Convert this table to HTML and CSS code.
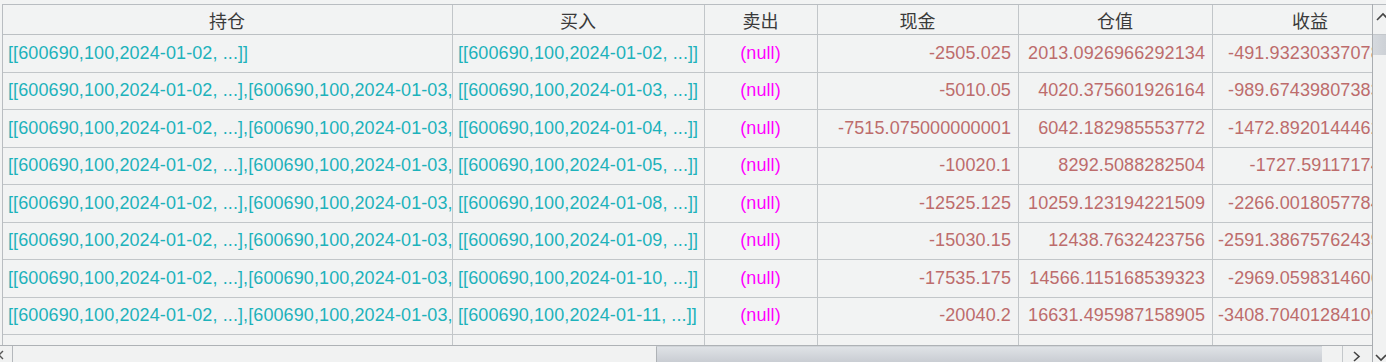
FILE: index.html
```html
<!DOCTYPE html>
<html>
<head>
<meta charset="utf-8">
<link rel="stylesheet" href="styles.css">
</head>
<body>
<div class="frame">
  <div class="main">
    <div class="viewport">
      <div class="table">
        <div class="row head">
          <div class="cell c">持仓</div>
          <div class="cell c">买入</div>
          <div class="cell c">卖出</div>
          <div class="cell c">现金</div>
          <div class="cell c">仓值</div>
          <div class="cell c">收益</div>
        </div>
        <div class="row">
          <div class="cell t">[[600690,100,2024-01-02, ...]]</div>
          <div class="cell t">[[600690,100,2024-01-02, ...]]</div>
          <div class="cell n">(null)</div>
          <div class="cell r">-2505.025</div>
          <div class="cell r">2013.0926966292134</div>
          <div class="cell r">-491.9323033707866</div>
        </div>
        <div class="row">
          <div class="cell t">[[600690,100,2024-01-02, ...],[600690,100,2024-01-03, ...]]</div>
          <div class="cell t">[[600690,100,2024-01-03, ...]]</div>
          <div class="cell n">(null)</div>
          <div class="cell r">-5010.05</div>
          <div class="cell r">4020.375601926164</div>
          <div class="cell r">-989.6743980738359</div>
        </div>
        <div class="row">
          <div class="cell t">[[600690,100,2024-01-02, ...],[600690,100,2024-01-03, ...]]</div>
          <div class="cell t">[[600690,100,2024-01-04, ...]]</div>
          <div class="cell n">(null)</div>
          <div class="cell r">-7515.075000000001</div>
          <div class="cell r">6042.182985553772</div>
          <div class="cell r">-1472.892014446229</div>
        </div>
        <div class="row">
          <div class="cell t">[[600690,100,2024-01-02, ...],[600690,100,2024-01-03, ...]]</div>
          <div class="cell t">[[600690,100,2024-01-05, ...]]</div>
          <div class="cell n">(null)</div>
          <div class="cell r">-10020.1</div>
          <div class="cell r">8292.5088282504</div>
          <div class="cell r">-1727.5911717496</div>
        </div>
        <div class="row">
          <div class="cell t">[[600690,100,2024-01-02, ...],[600690,100,2024-01-03, ...]]</div>
          <div class="cell t">[[600690,100,2024-01-08, ...]]</div>
          <div class="cell n">(null)</div>
          <div class="cell r">-12525.125</div>
          <div class="cell r">10259.123194221509</div>
          <div class="cell r">-2266.001805778491</div>
        </div>
        <div class="row">
          <div class="cell t">[[600690,100,2024-01-02, ...],[600690,100,2024-01-03, ...]]</div>
          <div class="cell t">[[600690,100,2024-01-09, ...]]</div>
          <div class="cell n">(null)</div>
          <div class="cell r">-15030.15</div>
          <div class="cell r">12438.7632423756</div>
          <div class="cell r">-2591.3867576243995</div>
        </div>
        <div class="row">
          <div class="cell t">[[600690,100,2024-01-02, ...],[600690,100,2024-01-03, ...]]</div>
          <div class="cell t">[[600690,100,2024-01-10, ...]]</div>
          <div class="cell n">(null)</div>
          <div class="cell r">-17535.175</div>
          <div class="cell r">14566.115168539323</div>
          <div class="cell r">-2969.059831460677</div>
        </div>
        <div class="row">
          <div class="cell t">[[600690,100,2024-01-02, ...],[600690,100,2024-01-03, ...]]</div>
          <div class="cell t">[[600690,100,2024-01-11, ...]]</div>
          <div class="cell n">(null)</div>
          <div class="cell r">-20040.2</div>
          <div class="cell r">16631.495987158905</div>
          <div class="cell r">-3408.7040128410953</div>
        </div>
        <div class="row">
          <div class="cell"></div>
          <div class="cell"></div>
          <div class="cell"></div>
          <div class="cell"></div>
          <div class="cell"></div>
          <div class="cell"></div>
        </div>
      </div>
    </div>
    <div class="hscroll">
      <div class="hbtn left">
        <svg width="12" height="16" viewBox="0 0 12 16"><path d="M3 5 L-1 9 L3 13" fill="none" stroke="#555" stroke-width="1.4"/></svg>
      </div>
      <div class="htrack">
        <div class="hspace"></div>
        <div class="hthumb"></div>
        <div class="hrest"></div>
      </div>
      <div class="hbtn right">
        <svg width="29" height="16" viewBox="0 0 29 16"><path d="M11 6 L16 10.5 L11 15" fill="none" stroke="#444" stroke-width="1.6"/></svg>
      </div>
    </div>
  </div>
  <div class="vscroll">
    <div class="vbtn up">
      <svg width="14" height="29" viewBox="0 0 14 29"><path d="M4 15 L10 9 L16 15" fill="none" stroke="#444" stroke-width="1.6"/></svg>
    </div>
    <div class="vthumb"></div>
    <div class="vtrack"></div>
    <div class="vbtn down">
      <svg width="14" height="14" viewBox="0 0 14 14"><path d="M3 5 L8 10 L13 5" fill="none" stroke="#444" stroke-width="1.6"/></svg>
    </div>
  </div>
</div>
</body>
</html>
```
FILE: styles.css
```css
html, body {
  margin: 0;
  padding: 0;
  background: #f2f3f3;
  overflow: hidden;
}
body {
  width: 1386px;
  height: 362px;
  font-family: "Liberation Sans", Arial, "Noto Sans CJK SC", sans-serif;
  font-size: 18px;
}
.frame {
  display: flex;
  height: 362px;
  padding-top: 4px;
  box-sizing: border-box;
}
.main {
  width: 1372px;
  display: flex;
  flex-direction: column;
}
.viewport {
  height: 341px;
  overflow: hidden;
  padding-left: 2px;
}
.table {
  border-top: 1px solid #b9bdc1;
  border-left: 1px solid #b9bdc1;
  width: max-content;
}
.row {
  display: grid;
  grid-template-columns: 450px 252px 113px 201px 194px 196px;
  height: 37.5px;
}
.row.head {
  height: 30px;
}
.cell {
  box-sizing: border-box;
  border-right: 1px solid #c2c6c9;
  border-bottom: 1px solid #c2c6c9;
  padding: 0 6px 0 5px;
  white-space: nowrap;
  overflow: hidden;
  display: flex;
  align-items: center;
  letter-spacing: 0.1px;
}
.head .cell {
  color: #3a3a3a;
  font-family: "Noto Sans CJK SC", sans-serif;
  font-size: 18px;
  letter-spacing: 0;
  justify-content: center;
  border-bottom-color: #bcc0c3;
}
.cell.t {
  color: #1db2bb;
}
.cell.n {
  color: #ff00ff;
  justify-content: center;
}
.cell.r {
  color: #bd6c6c;
  justify-content: flex-end;
  padding-right: 7px;
}
.hscroll {
  border-top: 1px solid #aeb2b6;
  display: flex;
  box-sizing: border-box;
  flex: none;
  height: 17px;
}
.hbtn {
  flex: none;
  background: #f0f1f1;
  overflow: hidden;
}
.hbtn.left {
  width: 12px;
  border-right: 1px solid #b4b8bc;
}
.hbtn.right {
  width: 29px;
  border-left: 1px solid #c4c8cb;
}
.htrack {
  flex: 1;
  display: flex;
  background: #f1f2f2;
}
.hspace {
  width: 643px;
}
.hthumb {
  width: 666px;
  box-sizing: border-box;
  border-left: 1px solid #aeb2b6;
  border-top: 1px solid #d0d4d8;
  background: linear-gradient(#dfe2e6, #c9cdd3);
}
.hrest {
  flex: 1;
}
.vscroll {
  width: 14px;
  border-left: 1px solid #a9adb1;
  display: flex;
  flex-direction: column;
  background: #f1f2f2;
  overflow: hidden;
}
.vbtn.up {
  height: 30px;
  flex: none;
  border-top: 1px solid #b9bdc1;
  box-sizing: border-box;
}
.vthumb {
  height: 21px;
  flex: none;
  background: linear-gradient(90deg, #d5d9de, #cdd1d6);
  border-top: 1px solid #c3c7cb;
  box-sizing: border-box;
}
.vtrack {
  flex: 1;
}
.vbtn.down {
  height: 14px;
  flex: none;
}
```
